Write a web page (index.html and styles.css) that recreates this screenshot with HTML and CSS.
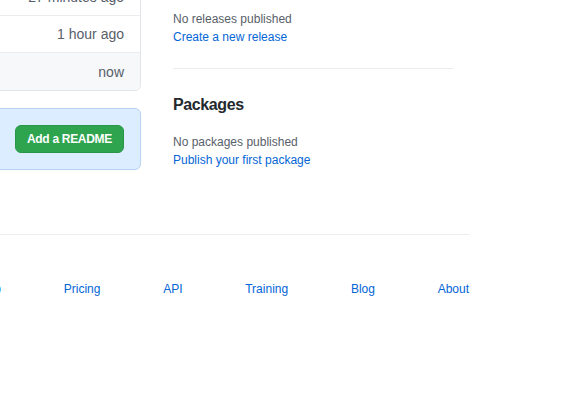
FILE: index.html
```html
<!DOCTYPE html>
<html lang="en">
<head>
<meta charset="utf-8">
<title>Repository</title>
<link rel="stylesheet" href="styles.css">
</head>
<body>
<div class="page">
  <div class="layout">
    <main class="main">
      <div class="file-box">
        <div class="file-row"><span class="file-name">README</span><span class="age">27 minutes ago</span></div>
        <div class="file-row"><span class="file-name">src</span><span class="age">1 hour ago</span></div>
        <div class="file-row file-row-muted"><span class="file-name">.gitignore</span><span class="age">now</span></div>
      </div>
      <div class="flash">
        <p class="flash-text">Add a README to help people.</p>
        <a class="btn-primary" href="#">Add a README</a>
      </div>
    </main>
    <aside class="sidebar">
      <section class="cell">
        <h2 class="cell-title">Releases</h2>
        <div class="muted">No releases published</div>
        <a class="link" href="#">Create a new release</a>
      </section>
      <section class="cell">
        <h2 class="cell-title">Packages</h2>
        <div class="muted">No packages published</div>
        <a class="link" href="#">Publish your first package</a>
      </section>
    </aside>
  </div>
  <footer class="footer">
    <ul class="footer-list footer-left">
      <li>© 2020 GitHub, Inc.</li>
      <li><a class="link" href="#">Terms</a></li>
      <li><a class="link" href="#">Privacy</a></li>
    </ul>
    <ul class="footer-list footer-right">
      <li><a class="link" href="#">Contact GitHub</a></li>
      <li><a class="link" href="#">Pricing</a></li>
      <li><a class="link" href="#">API</a></li>
      <li><a class="link" href="#">Training</a></li>
      <li><a class="link" href="#">Blog</a></li>
      <li><a class="link" href="#">About</a></li>
    </ul>
  </footer>
</div>
</body>
</html>
```
FILE: styles.css
```css
html, body {
  margin: 0;
  padding: 0;
  background: #ffffff;
  overflow: hidden;
}

body {
  font-family: "Liberation Sans", Arial, sans-serif;
  font-size: 12px;
  line-height: 18px;
  color: #24292e;
}

/* page is scrolled: its left and top parts lie outside the window */
.page {
  width: 769px;
  margin-left: -300px;
  margin-top: -54px;
}

.layout {
  display: flex;
  gap: 32px;
  padding-right: 16px;
  align-items: flex-start;
}

.main {
  flex: 1;
  min-width: 0;
  padding-top: 32px;
}

.file-box {
  border: 1px solid #e1e4e8;
  border-radius: 6px;
  overflow: hidden;
}

.file-row {
  display: flex;
  justify-content: space-between;
  align-items: center;
  height: 36px;
  padding: 0 16px;
  color: #586069;
  font-size: 14px;
}

.file-row + .file-row {
  border-top: 1px solid #eaecef;
}

.file-row-muted {
  background: #f6f8fa;
  height: 37px;
}

.file-name {
  color: #24292e;
}

.flash {
  margin-top: 17px;
  display: flex;
  align-items: center;
  gap: 40px;
  padding: 16px;
  background: #dbedff;
  border: 1px solid #b6d3f2;
  border-radius: 6px;
}

.flash-text {
  flex: 1;
  min-width: 0;
  margin: 0;
  font-size: 14px;
  line-height: 20px;
  color: #24292e;
  white-space: nowrap;
}

.btn-primary {
  flex: none;
  display: block;
  height: 26px;
  line-height: 26px;
  padding: 0 11px;
  border: 1px solid #2a9547;
  border-radius: 6px;
  background: #2ea44f;
  color: #ffffff;
  font-weight: 700;
  font-size: 12px;
  letter-spacing: -0.3px;
  text-decoration: none;
}

.sidebar {
  width: 280px;
  flex: none;
}

.cell {
  padding: 24px 0;
}

.cell + .cell {
  border-top: 1px solid #eaecef;
}

.cell:first-child {
  padding-bottom: 22px;
}

.cell-title {
  margin: 0 0 16px;
  font-size: 16px;
  line-height: 24px;
  font-weight: 700;
  color: #24292e;
  letter-spacing: -0.4px;
}

.muted {
  color: #586069;
}

.link {
  display: block;
  color: #0366d6;
  text-decoration: none;
}

.footer {
  margin-top: 41px;
  padding-top: 45px;
  border-top: 1px solid #eaecef;
  display: flex;
  justify-content: space-between;
}

.footer-list {
  list-style: none;
  margin: 0;
  padding: 0;
  display: flex;
  gap: 16px;
  color: #586069;
}

.footer-right {
  width: 550px;
  justify-content: space-between;
  gap: 0;
}
```
